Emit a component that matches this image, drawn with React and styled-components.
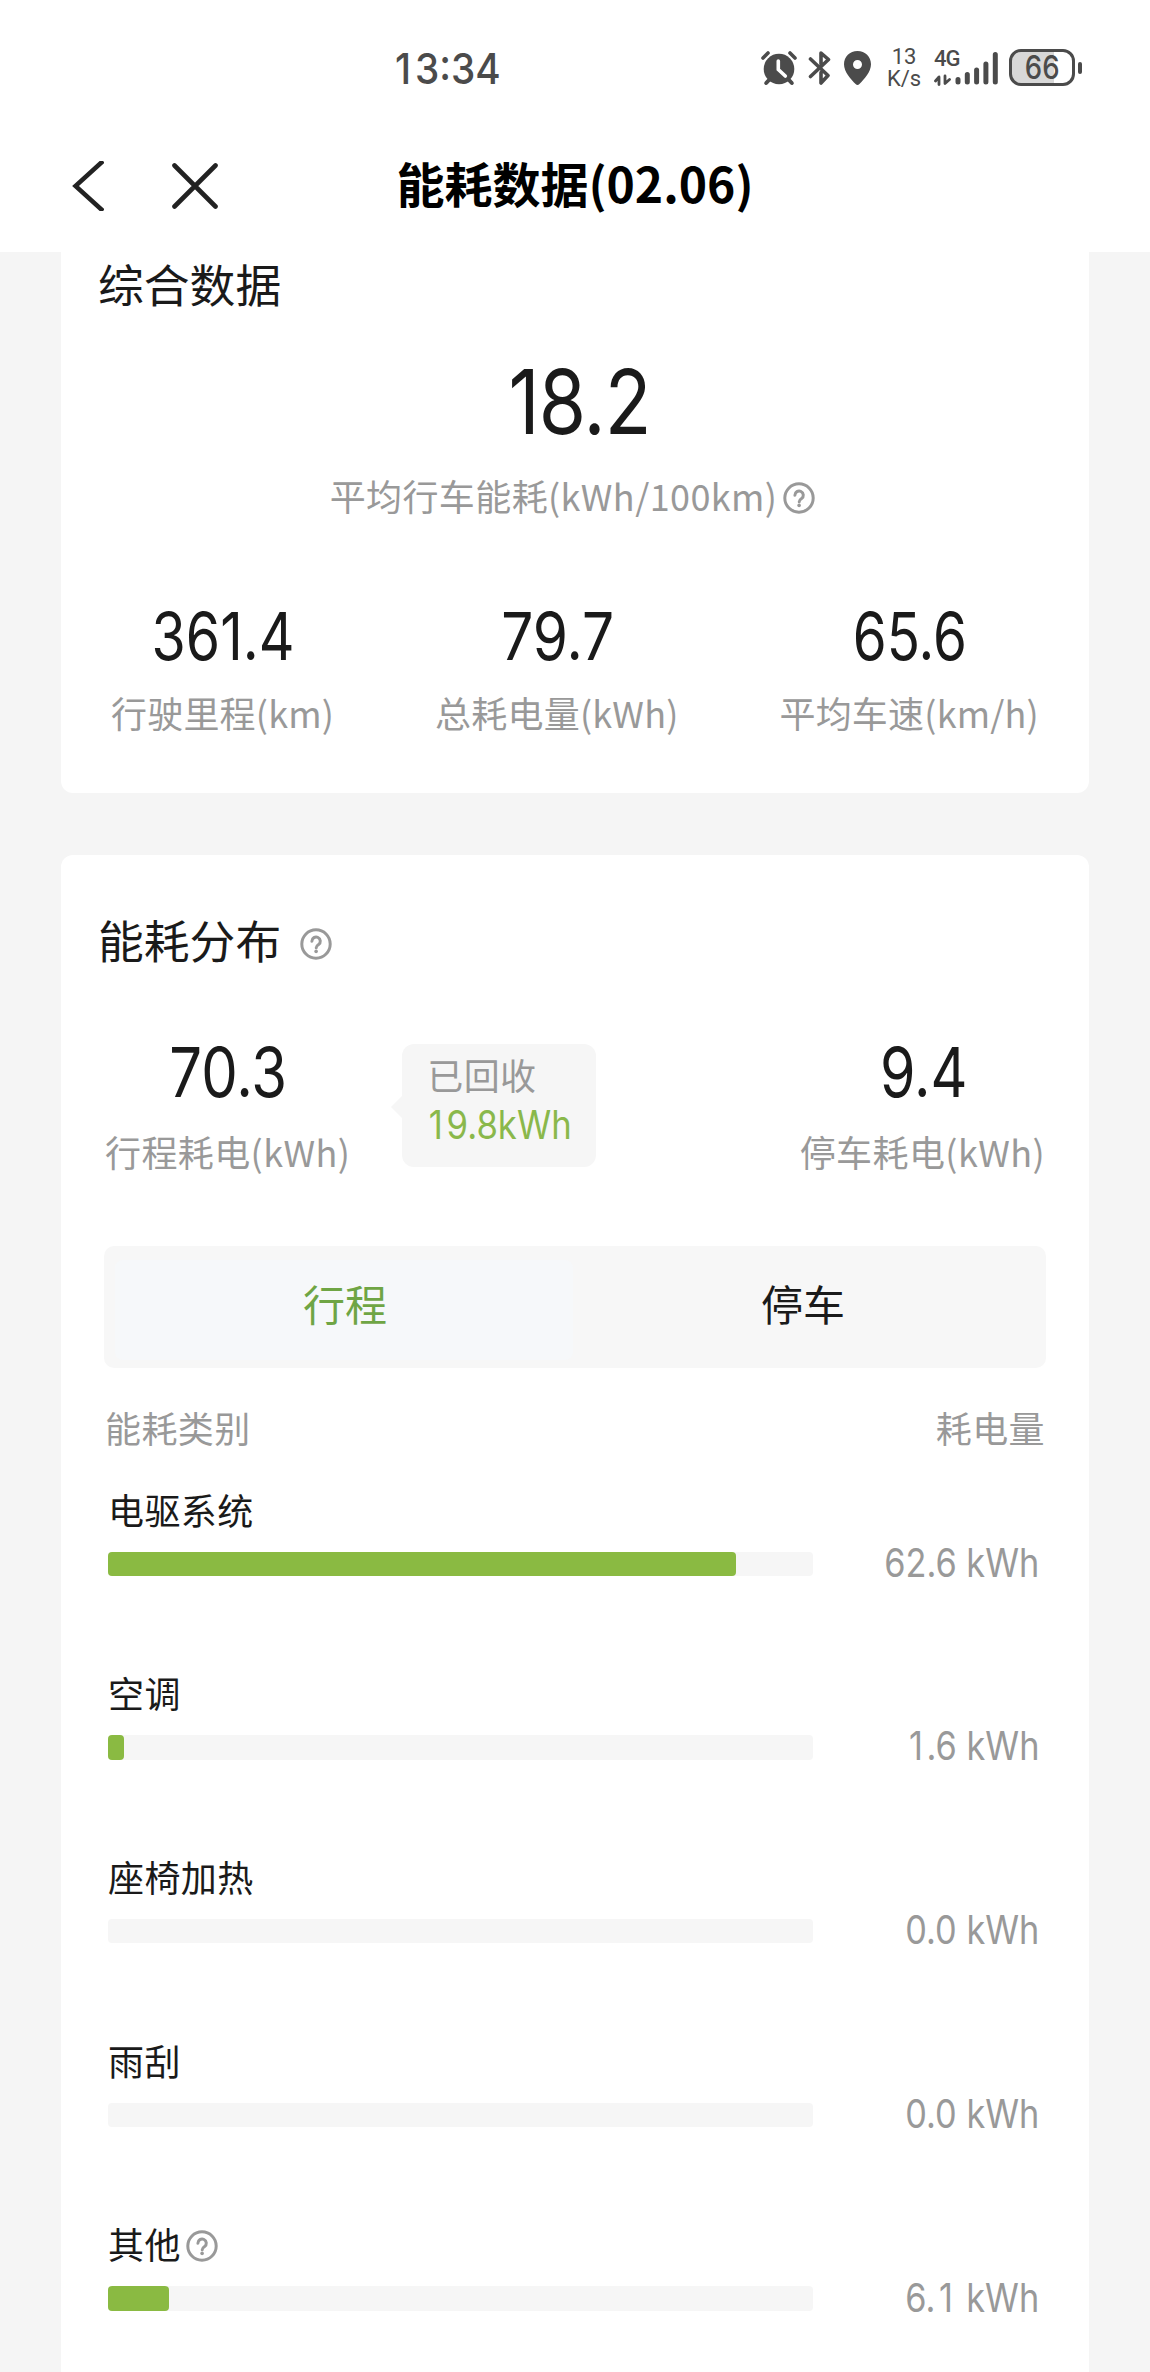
import React from 'react';
import styled, {createGlobalStyle} from 'styled-components';


const GlobalStyle = createGlobalStyle`
  * {
    box-sizing: border-box;
  }
  body {
    margin: 0;
    background: #f5f5f5;
    color: #1a1a1a;
    font-family: "Noto Sans CJK SC", sans-serif;
  }
`

const usage = [
  {name: '电驱系统', value: 62.6},
  {name: '空调', value: 1.6},
  {name: '座椅加热', value: 0},
  {name: '雨刮', value: 0},
  {name: '其他', value: 6.1, help: true},
]

const tripTotal = 70.3


function Help() {
  return (
    <HelpIcon viewBox="0 0 32 32">
      <circle cx="16" cy="16" r="14.2" strokeWidth="3"/>
      <path d="M11.9 13.2a4.2 4.2 0 1 1 6.7 3.4c-1.6 1.1-2.4 1.7-2.4 3.2" strokeWidth="3"/>
      <circle cx="16.1" cy="23.4" r="1.8" fill="#999" stroke="none"/>
    </HelpIcon>
  )
}

/* gives the narrow 1 the same advance as the other digits */
function Tabular({text}) {
  return text.split('').map((char, i) => char === '1' ? <One key={i}>1</One> : char)
}

function StatusBar() {
  return (
    <StatusWrapper>
      <Clock><Digits $size={43} $squeeze={0.9} $weight={500} $origin="left"><Tabular text="13:34"/></Digits></Clock>
      <StatusIcons>
        <svg width="36" height="36" viewBox="0 0 36 36" fill="none" stroke="#4b4b4b" strokeLinecap="round">
          <circle cx="18" cy="19" r="15.3" fill="#4b4b4b" stroke="none"/>
          <path d="M2 8L7 3M34 8L29 3" strokeWidth="3.6"/>
          <path d="M8 30L5.200 33M28 30L30.800 33" strokeWidth="4"/>
          <path d="M17.300 11V19.500L24.300 26" stroke="#fff" strokeWidth="3.6"/>
        </svg>
        <svg width="24" height="36" viewBox="0 0 24 36" fill="none" stroke="#4b4b4b" strokeWidth="3.600" strokeLinecap="round" strokeLinejoin="round">
          <path d="M2.500 9L20 25.500L13 33V22.500M13 14V3L20.500 9.500L2.500 26.500"/>
        </svg>
        <svg width="29" height="36" viewBox="0 0 29 36">
          <path fillRule="evenodd" fill="#4b4b4b" d="M14.500 1C6.800 1 1 6.800 1 14.300C1 22 8 29.500 12.600 34Q14.500 35.800 16.400 34C21 29.500 28 22 28 14.300C28 6.800 22.200 1 14.500 1ZM14.500 10a4.500 4.500 0 1 1 0 9a4.500 4.500 0 1 1 0-9Z"/>
        </svg>
        <Speed>
          <span>13</span>
          <span>K/s</span>
        </Speed>
        <Signal>
          <Network>4G</Network>
          <svg width="64" height="36" viewBox="0 0 64 36" fill="none" stroke="#4b4b4b" strokeWidth="5" strokeLinecap="round">
            <path d="M24 29.500V32M33.300 24.500V32M42.600 20V32M51.900 14V32M61.300 4.500V32"/>
            <path d="M5 34.500V27L1.500 31M11 26V33.500L15.500 29.500" strokeWidth="2.800" strokeLinejoin="round"/>
          </svg>
        </Signal>
        <Battery>
          <BatteryBody><Digits $size={32} $squeeze={0.86} $weight={500}>66</Digits></BatteryBody>
          <BatteryTip/>
        </Battery>
      </StatusIcons>
    </StatusWrapper>
  )
}

function Stat({value, label, size = 66, squeeze = 0.84}) {
  return (
    <StatWrapper>
      <StatValue><Digits $size={size} $squeeze={squeeze}>{value}</Digits></StatValue>
      <Label>{label}</Label>
    </StatWrapper>
  )
}

function UsageRow({name, value, help}) {
  return (
    <li>
      <UsageName>{name}{help && <Help/>}</UsageName>
      <UsageLine>
        <Track><Fill style={{width: `${value / tripTotal * 100}%`}}/></Track>
        <UsageValue>
          <Digits $size={39} $squeeze={0.88} $origin="right"><Tabular text={`${value.toFixed(1)} kWh`}/></Digits>
        </UsageValue>
      </UsageLine>
    </li>
  )
}

export default function App() {
  return (
    <>
      <GlobalStyle/>
      <Page>
        <StatusBar/>
        <Navbar>
          <svg width="32" height="50" viewBox="0 0 32 50" fill="none" stroke="#222" strokeWidth="4.500">
            <path d="M31 0L3.500 25L31 50"/>
          </svg>
          <svg width="46" height="46" viewBox="0 0 46 46" fill="none" stroke="#222" strokeWidth="4.600" strokeLinecap="round">
            <path d="M2.500 2.500L43.500 43.500M43.500 2.500L2.500 43.500"/>
          </svg>
          <Title>能耗数据(02.06)</Title>
        </Navbar>
        <Summary>
          <SectionTitle>综合数据</SectionTitle>
          <Average><Digits $size={89} $squeeze={0.86} $spacing={-1}>18.2</Digits></Average>
          <AverageLabel>平均行车能耗(kWh/100km)<Help/></AverageLabel>
          <SummaryStats>
            <Stat value="361.4" label="行驶里程(km)"/>
            <Stat value="79.7" label="总耗电量(kWh)" squeeze={0.86}/>
            <Stat value="65.6" label="平均车速(km/h)" squeeze={0.83}/>
          </SummaryStats>
        </Summary>
        <Distribution>
          <SectionTitle>能耗分布<Help/></SectionTitle>
          <Split>
            <Stat value="70.3" label="行程耗电(kWh)" size={69} squeeze={0.84}/>
            <Recovered>
              <Label>已回收</Label>
              <RecoveredValue>
                <Digits $size={39} $squeeze={0.89} $origin="left"><Tabular text="19.8kWh"/></Digits>
              </RecoveredValue>
            </Recovered>
            <Stat value="9.4" label="停车耗电(kWh)" size={69} squeeze={0.83}/>
          </Split>
          <Tabs>
            <Tab $active>行程</Tab>
            <Tab>停车</Tab>
          </Tabs>
          <ListHead>
            <Label>能耗类别</Label>
            <Label>耗电量</Label>
          </ListHead>
          <UsageList>
            {usage.map(item => <UsageRow key={item.name} {...item}/>)}
          </UsageList>
        </Distribution>
      </Page>
    </>
  )
}


const Page = styled.div`
  width: 1150px;
  height: 2372px;
  overflow: hidden;
`

const HelpIcon = styled.svg`
  width: 32px;
  height: 32px;
  flex: none;
  fill: none;
  stroke: #999;
  stroke-linecap: round;
`

/* numbers are set a little condensed */
const Digits = styled.span`
  display: block;
  font-family: Inter, sans-serif;
  font-size: ${props => props.$size}px;
  font-weight: ${props => props.$weight || 400};
  letter-spacing: ${props => props.$spacing || 0}px;
  white-space: pre;
  transform: scaleX(${props => props.$squeeze});
  transform-origin: ${props => props.$origin || 'center'};
`

const One = styled.span`
  display: inline-block;
  width: 0.62em;
  text-align: center;
`

const StatusWrapper = styled.div`
  display: flex;
  justify-content: space-between;
  align-items: center;
  height: 135px;
  padding: 0 68px 0 391px;
  background: #fff;
  color: #4b4b4b;
`

const Clock = styled.div`
  line-height: 50px;
`

const StatusIcons = styled.div`
  display: flex;
  align-items: center;
  svg {
    flex: none;
    display: block;
  }
  > svg + svg {
    margin-left: 11px;
  }
`

const Speed = styled.div`
  display: flex;
  flex-direction: column;
  align-items: center;
  width: 36px;
  margin-left: 14px;
  padding-top: 1px;
  font: 22px/22px Roboto, sans-serif;
`

const Signal = styled.div`
  position: relative;
  margin-left: 12px;
`

const Network = styled.span`
  position: absolute;
  top: -3px;
  left: 0;
  font: 500 22px/24px Roboto, sans-serif;
  letter-spacing: -1px;
`

const Battery = styled.div`
  display: flex;
  align-items: center;
  gap: 3px;
  margin-left: 11px;
`

const BatteryBody = styled.div`
  display: flex;
  align-items: center;
  justify-content: center;
  width: 66px;
  height: 37px;
  border: 3px solid #4b4b4b;
  border-radius: 12px;
  background: linear-gradient(90deg, #d8d8d8 70%, #fff 70%);
  line-height: 30px;
`

const BatteryTip = styled.div`
  width: 4px;
  height: 12px;
  border-radius: 2px;
  background: #4b4b4b;
`

const Navbar = styled.nav`
  position: relative;
  display: flex;
  align-items: center;
  gap: 68px;
  height: 117px;
  padding: 0 72px 15px;
  background: #fff;
`

const Title = styled.h1`
  position: absolute;
  left: 0;
  right: 0;
  top: 14px;
  margin: 0;
  color: #000;
  font-size: 48px;
  font-weight: 700;
  line-height: 66px;
  text-align: center;
  pointer-events: none;
`

const Card = styled.section`
  width: 1028px;
  margin: 0 auto;
  background: #fff;
`

const Summary = styled(Card)`
  height: 541px;
  padding-top: 1px;
  border-radius: 0 0 12px 12px;
`

const Distribution = styled(Card)`
  height: 1600px;
  margin-top: 62px;
  padding-top: 54px;
  border-radius: 12px;
`

const SectionTitle = styled.h2`
  display: flex;
  align-items: center;
  margin: 0;
  padding-left: 37px;
  font-size: 45.8px;
  font-weight: 400;
  line-height: 60px;
  svg {
    margin: 10px 0 0 19px;
  }
`

const Label = styled.div`
  color: #999;
  font-size: 36px;
  line-height: 50px;
  letter-spacing: 0.4px;
  white-space: nowrap;
`

const Average = styled.div`
  display: flex;
  justify-content: center;
  margin-top: 39px;
  padding-left: 9px;
  line-height: 100px;
`

const AverageLabel = styled(Label)`
  display: flex;
  align-items: center;
  justify-content: center;
  margin-top: 18px;
  padding-right: 5px;
  svg {
    margin: 6px 0 0 6px;
  }
`

const SummaryStats = styled.div`
  display: flex;
  justify-content: space-between;
  margin-top: 86px;
  padding: 0 50px;
  > div {
    gap: 21px;
  }
  ${Label} {
    letter-spacing: 0.2px;
  }
`

const StatWrapper = styled.div`
  display: flex;
  flex-direction: column;
  align-items: center;
  gap: 24px;
`

const StatValue = styled.div`
  padding-left: 2px;
  line-height: 60px;
`

const Split = styled.div`
  display: flex;
  align-items: flex-start;
  margin-top: 73px;
  padding: 0 44px;
  > :last-child {
    margin-left: auto;
  }
`

const Recovered = styled.div`
  position: relative;
  width: 194px;
  height: 123px;
  margin: 2px 0 0 52px;
  padding: 5px 0 0 25px;
  border-radius: 12px;
  background: #f6f6f6;
  &::before {
    content: '';
    position: absolute;
    left: -11px;
    top: 52px;
    border: 11px solid transparent;
    border-left: 0;
    border-right-color: #f6f6f6;
  }
`

const RecoveredValue = styled.div`
  margin-left: -2px;
  color: #8ab84b;
  line-height: 52px;
`

const Tabs = styled.div`
  display: flex;
  height: 122px;
  margin: 70px 43px 0;
  padding: 14px 15px 8px 11px;
  border-radius: 10px;
  background: #f7f7f7;
`

const Tab = styled.div`
  flex: 1;
  border-radius: 8px;
  background: ${props => props.$active ? '#f6f8fa' : 'transparent'};
  color: ${props => props.$active ? '#6fa544' : '#1a1a1a'};
  font-size: 42px;
  line-height: 86px;
  text-align: center;
  text-indent: 2px;
`

const ListHead = styled.div`
  display: flex;
  justify-content: space-between;
  margin-top: 34px;
  padding: 0 44px;
`

const UsageList = styled.ul`
  display: flex;
  flex-direction: column;
  gap: 91.2px;
  margin: 31.5px 0 0;
  padding: 0 50px 0 47px;
  list-style: none;
`

const UsageName = styled.div`
  display: flex;
  align-items: center;
  font-size: 36px;
  line-height: 50px;
  letter-spacing: 0.4px;
  svg {
    margin: 5px 0 0 5px;
  }
`

const UsageLine = styled.div`
  display: flex;
  align-items: center;
  justify-content: space-between;
  height: 24.5px;
  margin-top: 18px;
`

const Track = styled.div`
  width: 705px;
  height: 24.5px;
  border-radius: 4px;
  background: #f6f6f6;
`

const Fill = styled.div`
  height: 100%;
  border-radius: 4px;
  background: #8aba42;
`

const UsageValue = styled.div`
  padding-bottom: 2px;
  color: #999;
  line-height: 24px;
`
